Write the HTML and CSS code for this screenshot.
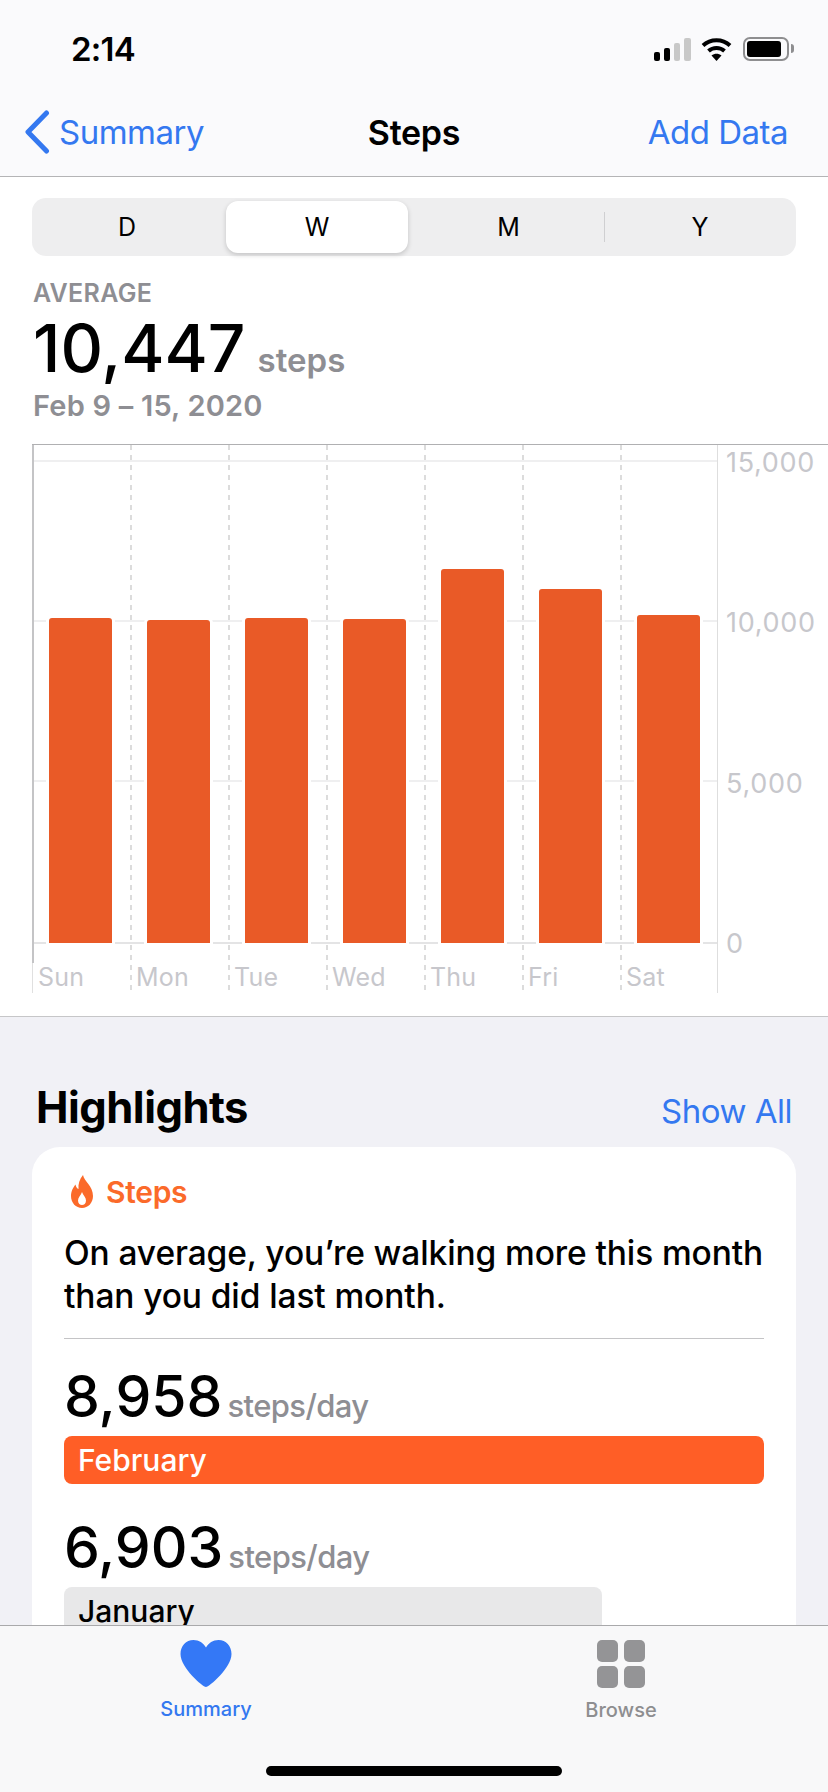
FILE: index.html
```html
<!DOCTYPE html>
<html lang="en">
<head>
  <meta charset="UTF-8">
  <meta name="viewport" content="width=device-width, initial-scale=1.0">
  <title>Steps</title>
  <link rel="stylesheet" href="styles.css">
</head>
<body>
<div class="phone">
  <header class="top-bar">
    <div class="status-bar">
      <span class="time">2:14</span>
      <div class="status-icons">
        <svg class="signal" width="37" height="24" viewBox="0 0 37 24">
          <rect x="0" y="14" width="6" height="9" rx="2" fill="#000"/>
          <rect x="10" y="10" width="6" height="13" rx="2" fill="#000"/>
          <rect x="20" y="5" width="6" height="18" rx="2" fill="#c8c8c8"/>
          <rect x="30" y="0" width="7" height="23" rx="2" fill="#c8c8c8"/>
        </svg>
        <svg class="wifi" width="31" height="24" viewBox="0 0 31 24">
          <path d="M2 8.500C9.500 1.500 21.500 1.500 29 8.500" fill="none" stroke="#000" stroke-width="4"/>
          <path d="M7.500 14C12 10 19 10 23.500 14" fill="none" stroke="#000" stroke-width="4"/>
          <path d="M10.500 18.500C13.500 16 17.500 16 20.500 18.500L15.500 24Z" fill="#000"/>
        </svg>
        <div class="battery"><div class="battery-level"></div></div>
        <div class="battery-nub"></div>
      </div>
    </div>
    <nav class="nav-bar">
      <a class="back">
        <svg width="26" height="44" viewBox="0 0 26 44"><path d="M22.500 3L4 22L22.500 41" fill="none" stroke="#3478f0" stroke-width="5" stroke-linecap="round" stroke-linejoin="round"/></svg>
        <span>Summary</span>
      </a>
      <span class="nav-title">Steps</span>
      <a class="nav-action">Add Data</a>
    </nav>
  </header>

  <main class="content">
    <section class="chart-section">
      <div class="segments">
        <div class="segment">D</div>
        <div class="segment active">W</div>
        <div class="segment">M</div>
        <div class="segment divided">Y</div>
      </div>
      <div class="summary-label">AVERAGE</div>
      <div class="summary-value"><span class="big-number">10,447</span><span class="unit">steps</span></div>
      <div class="summary-date">Feb 9 – 15, 2020</div>

      <div class="chart">
        <div class="plot">
          <div class="day"><div class="bar-area"><div class="bar" style="height:325px"></div></div><span class="day-label">Sun</span></div>
          <div class="day"><div class="bar-area"><div class="bar" style="height:323px"></div></div><span class="day-label">Mon</span></div>
          <div class="day"><div class="bar-area"><div class="bar" style="height:325px"></div></div><span class="day-label">Tue</span></div>
          <div class="day"><div class="bar-area"><div class="bar" style="height:324px"></div></div><span class="day-label">Wed</span></div>
          <div class="day"><div class="bar-area"><div class="bar" style="height:374px"></div></div><span class="day-label">Thu</span></div>
          <div class="day"><div class="bar-area"><div class="bar" style="height:354px"></div></div><span class="day-label">Fri</span></div>
          <div class="day"><div class="bar-area"><div class="bar" style="height:328px"></div></div><span class="day-label">Sat</span></div>
        </div>
        <div class="y-axis">
          <span>15,000</span>
          <span>10,000</span>
          <span>5,000</span>
          <span>0</span>
        </div>
      </div>
    </section>

    <section class="highlights">
      <div class="section-head">
        <h2>Highlights</h2>
        <a class="show-all">Show All</a>
      </div>
      <div class="card">
        <div class="card-title">
          <svg width="22" height="33" viewBox="0 0 22 33"><path fill-rule="evenodd" d="M12 0C13 6 22 11 22 21C22 28 17 33 11 33C5 33 0 28 0 21C0 16 2.500 12 4.500 9.500C5 12 6 13.500 7.500 14C7 9 8.500 4 12 0ZM11 17C12 20 15 22.500 15 25.500C15 28.500 13 30 11 30C9 30 7 28.500 7 25.500C7 22.500 10 20 11 17Z" fill="#fb6a2a"/></svg>
          <span>Steps</span>
        </div>
        <p class="card-text">On average, you’re walking more this month<br>than you did last month.</p>
        <div class="stat first">
          <div class="stat-value"><span class="stat-number">8,958</span><span class="stat-unit">steps/day</span></div>
          <div class="month-bar current">February</div>
        </div>
        <div class="stat">
          <div class="stat-value"><span class="stat-number">6,903</span><span class="stat-unit">steps/day</span></div>
          <div class="month-bar previous">January</div>
        </div>
      </div>
    </section>
  </main>

  <footer class="tab-bar">
    <div class="tabs">
      <div class="tab selected">
        <svg width="52" height="47" viewBox="0 0 52 47"><path d="M26 47C23 47 0.500 28 0.500 14C0.500 6 6 0 13.500 0C19 0 23.500 3 26 7.500C28.500 3 33 0 38.500 0C46 0 51.500 6 51.500 14C51.500 28 29 47 26 47Z" fill="#3478f6"/></svg>
        <span>Summary</span>
      </div>
      <div class="tab">
        <div class="grid-icon"><i></i><i></i><i></i><i></i></div>
        <span>Browse</span>
      </div>
    </div>
    <div class="home-indicator"></div>
  </footer>
</div>
</body>
</html>
```

FILE: styles.css
```css
* {
  box-sizing: border-box;
}
body {
  margin: 0;
  font-family: 'Inter', 'Liberation Sans', sans-serif;
  color: #000;
  background: #fff;
}
.phone {
  width: 828px;
  height: 1792px;
  display: flex;
  flex-direction: column;
  overflow: hidden;
}

/* top bars */
.top-bar {
  height: 177px;
  flex: none;
  background: #fafafc;
  border-bottom: 1px solid #b4b4b6;
}
.status-bar {
  height: 88px;
  padding: 31px 34px 0 71px;
  display: flex;
  justify-content: space-between;
  align-items: flex-start;
}
.time {
  font-size: 33px;
  font-weight: 600;
  line-height: 36px;
  letter-spacing: -0.8px;
}
.status-icons {
  display: flex;
  align-items: flex-start;
  padding-top: 6px;
}
.signal {
  margin-top: 1px;
  margin-right: 10px;
}
.wifi {
  margin-right: 11px;
}
.battery {
  width: 46px;
  height: 24px;
  border: 2px solid #8e8e90;
  border-radius: 7px;
  padding: 2px;
}
.battery-level {
  width: 34px;
  height: 16px;
  background: #000;
  border-radius: 3px;
}
.battery-nub {
  width: 3px;
  height: 9px;
  margin: 7px 0 0 2px;
  background: #8e8e90;
  border-radius: 0 3px 3px 0;
}
.nav-bar {
  height: 88px;
  padding: 0 40px 0 24px;
  display: flex;
  justify-content: space-between;
  align-items: center;
  position: relative;
  font-size: 33px;
  letter-spacing: -0.5px;
  color: #3478f0;
}
.back {
  display: flex;
  align-items: center;
  gap: 9px;
}
.nav-title {
  position: absolute;
  left: 0;
  right: 0;
  text-align: center;
  color: #000;
  font-size: 34px;
  font-weight: 600;
  letter-spacing: -0.3px;
}

/* chart */
.content {
  flex: 1;
  overflow: hidden;
  background: #f1f1f6;
}
.chart-section {
  height: 840px;
  background: #fff;
  border-bottom: 1px solid #c6c6c8;
  padding-top: 21px;
}
.segments {
  margin: 0 32px;
  height: 58px;
  padding: 3px 0;
  display: grid;
  grid-template-columns: 190px 191px 191px 1fr;
  background: #eeeeef;
  border-radius: 14px;
  font-size: 25px;
}
.segment {
  display: flex;
  align-items: center;
  justify-content: center;
  position: relative;
}
.segment.active {
  margin: 0 5px 0 4px;
  background: #fff;
  border-radius: 12px;
  box-shadow: 0 2px 5px rgba(0, 0, 0, 0.18);
}
.segment.divided::before {
  content: "";
  position: absolute;
  left: 0;
  top: 11px;
  bottom: 11px;
  width: 1px;
  background: #cfcfd1;
}
.summary-label {
  margin: 22px 0 0 33px;
  font-size: 25px;
  font-weight: 600;
  line-height: 30px;
  letter-spacing: 0.3px;
  color: #8e8e93;
}
.summary-value {
  margin: 5px 0 0 33px;
  display: flex;
  align-items: baseline;
  gap: 12px;
  height: 70px;
  line-height: 70px;
}
.big-number {
  font-size: 66px;
  font-weight: 500;
}
.unit {
  font-size: 33px;
  font-weight: 600;
  color: #8e8e93;
}
.summary-date {
  margin: 6px 0 0 33px;
  font-size: 29px;
  font-weight: 600;
  line-height: 34px;
  letter-spacing: 0.2px;
  color: #8e8e93;
}
.chart {
  margin: 21px 0 0 32px;
  height: 549px;
  border-top: 1px solid #b0b0b2;
  display: flex;
}
.plot {
  width: 686px;
  flex: none;
  display: flex;
  border-right: 1px solid #dedede;
  background:
    linear-gradient(#efeff0, #efeff0) 0 15px / 100% 2px no-repeat,
    linear-gradient(#efeff0, #efeff0) 0 175px / 100% 2px no-repeat,
    linear-gradient(#efeff0, #efeff0) 0 335px / 100% 2px no-repeat,
    linear-gradient(#e4e4e5, #e4e4e5) 0 497px / 100% 2px no-repeat;
}
.day {
  width: 98px;
  flex: none;
  background: repeating-linear-gradient(#dcdcdc 0 5px, transparent 5px 10px) 0 0 / 2px 100% no-repeat;
}
.day:first-child {
  background: linear-gradient(#c4c4c6, #c4c4c6) 0 0 / 2px 518px no-repeat, linear-gradient(#e0e0e0, #e0e0e0) 0 0 / 1px 100% no-repeat;
}
.bar-area {
  height: 498px;
  display: flex;
  align-items: flex-end;
  padding: 0 18px 0 17px;
}
.bar {
  width: 63px;
  background: #e95a27;
  border-radius: 3px 3px 0 0;
  box-shadow: 0 0 0 3px #fff;
}
.day-label {
  display: block;
  margin: 19px 0 0 6px;
  font-size: 25px;
  line-height: 30px;
  letter-spacing: 0.2px;
  color: #c7c7cc;
}
.y-axis {
  flex: 1;
  padding: 3px 0 0 8px;
  font-size: 27px;
  letter-spacing: 0.7px;
  color: #c7c7cc;
  height: 514px;
  display: flex;
  flex-direction: column;
  justify-content: space-between;
}
.y-axis span {
  line-height: 30px;
}

/* highlights */
.section-head {
  margin: 0 36px 0 36px;
  height: 130px;
  padding-bottom: 15px;
  display: flex;
  justify-content: space-between;
  align-items: flex-end;
}
.section-head h2 {
  margin: 0;
  font-size: 43.500px;
  font-weight: 700;
  line-height: 50px;
  letter-spacing: -0.5px;
}
.show-all {
  font-size: 33px;
  line-height: 42px;
  letter-spacing: -0.5px;
  color: #3478f0;
}
.card {
  margin: 0 32px;
  padding: 28px 32px 0;
  height: 600px;
  background: #fff;
  border-radius: 28px 28px 0 0;
}
.card-title {
  display: flex;
  align-items: center;
  gap: 13px;
  margin-left: 7px;
  height: 33px;
  font-size: 30px;
  font-weight: 600;
  color: #fb6a2a;
  letter-spacing: -0.3px;
}
.card-text {
  margin: 24px 0 0;
  padding-bottom: 20px;
  border-bottom: 1px solid #c4c4c6;
  font-size: 33.500px;
  font-weight: 500;
  line-height: 43px;
  letter-spacing: -0.1px;
  white-space: nowrap;
}
.stat {
  margin-top: 34px;
}
.stat.first {
  margin-top: 28px;
}
.stat-value {
  display: flex;
  align-items: baseline;
  gap: 5px;
  height: 60px;
  line-height: 60px;
}
.stat-number {
  font-size: 57px;
  font-weight: 500;
}
.stat-unit {
  font-size: 31px;
  font-weight: 500;
  color: #8e8e93;
  letter-spacing: -0.6px;
}
.month-bar {
  margin-top: 9px;
  height: 48px;
  padding-left: 14px;
  border-radius: 8px;
  font-size: 30px;
  font-weight: 500;
  line-height: 48px;
}
.month-bar.current {
  background: #ff5e26;
  color: #fff;
}
.month-bar.previous {
  width: 538px;
  background: #e8e8e9;
}

/* tab bar */
.tab-bar {
  height: 167px;
  flex: none;
  background: #f8f8f9;
  border-top: 1px solid #a9a9ab;
  position: relative;
}
.tabs {
  display: flex;
  padding-top: 14px;
}
.tab {
  width: 414px;
  display: flex;
  flex-direction: column;
  align-items: center;
  font-size: 20px;
  font-weight: 500;
  color: #8e8e90;
}
.tab span {
  margin-top: 9px;
  line-height: 26px;
}
.tab.selected {
  padding-right: 2px;
  color: #3478f0;
}
.grid-icon {
  width: 48px;
  height: 48px;
  display: grid;
  grid-template-columns: 1fr 1fr;
  gap: 4px 6px;
}
.grid-icon i {
  background: #949496;
  border-radius: 5px;
}
.home-indicator {
  position: absolute;
  left: 266px;
  top: 140px;
  width: 296px;
  height: 10px;
  background: #000;
  border-radius: 5px;
}
```
